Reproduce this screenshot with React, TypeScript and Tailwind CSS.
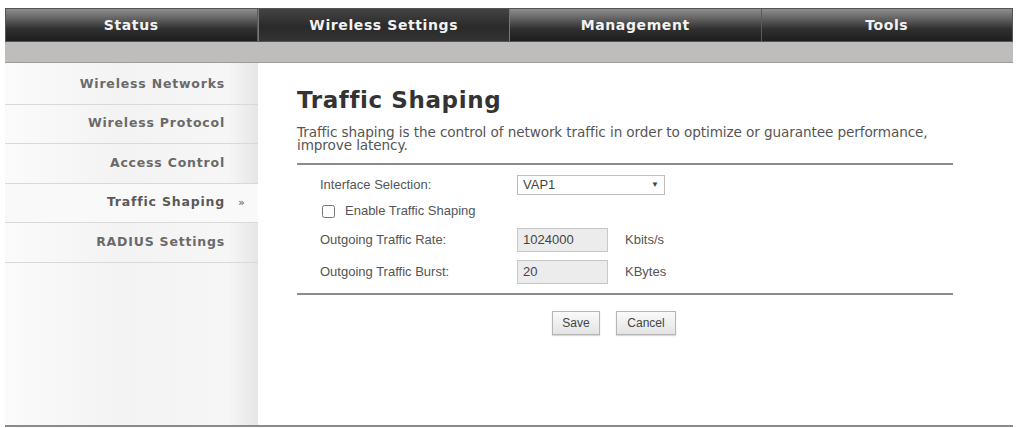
import { useState } from "react";

const tabs = ["Status", "Wireless Settings", "Management", "Tools"];
const side = ["Wireless Networks", "Wireless Protocol", "Access Control", "Traffic Shaping", "RADIUS Settings"];

export default function App() {
  const [enabled, setEnabled] = useState(false);
  const active = "Traffic Shaping";

  return (
    <div className="w-[1018px] h-[428px] bg-white overflow-hidden pt-[8px] pl-[5px] pr-[5px] font-['DejaVu_Sans',sans-serif]">
      {/* top navigation */}
      <div className="flex h-[34px] border border-[#555]">
        {tabs.map((t) => {
          const on = t === "Wireless Settings";
          return (
            <div
              key={t}
              className={
                on
                  ? "flex-1 flex items-center justify-center border-l border-r border-[#777] bg-[linear-gradient(to_bottom,#444,#2a2a2a_55%,#333)] text-[14px] font-bold tracking-[0.6px] text-[#f2f2f2]"
                  : "flex-1 flex items-center justify-center border-r border-[#5a5a5a] last:border-r-0 bg-[linear-gradient(to_bottom,#8e8e8e,#626262_30%,#303030_62%,#1e1e1e)] text-[14px] font-bold tracking-[0.6px] text-[#f2f2f2]"
              }
            >
              {t}
            </div>
          );
        })}
      </div>
      <div className="h-[21px] bg-[#bfbcbc] border-b border-[#9c9a9a]" />

      <div className="flex h-[364px] border-b-2 border-[#8a8a8a]">
        {/* sidebar */}
        <div className="w-[253px] shrink-0 pt-[2px] bg-[linear-gradient(to_right,#fbfbfb,#f3f3f3_45%,#f6f6f6_88%,#e6e6e6)]">
          {side.map((s) => {
            const on = s === active;
            return (
              <div
                key={s}
                className={
                  on
                    ? "flex items-center justify-end h-[39.5px] border-b border-[#d9d9d9] bg-[#f9f9f9] text-[12.5px] font-bold tracking-[0.8px] text-[#595959]"
                    : "flex items-center justify-end h-[39.5px] border-b border-[#d9d9d9] text-[12.5px] font-bold tracking-[0.8px] text-[#6a6a6a]"
                }
              >
                <span>{s}</span>
                <span className="w-[33px] text-center text-[10px] text-[#777] tracking-normal">{on ? "»" : ""}</span>
              </div>
            );
          })}
        </div>

        {/* main */}
        <div className="flex-1 pl-[39px] pt-[23px]">
          <div className="w-[656px]">
            <h1 className="text-[23px] font-bold tracking-[0.6px] text-[#333] leading-[28px]">Traffic Shaping</h1>
            <p className="mt-[12px] text-[13.6px] leading-[13px] tracking-[-0.1px] text-[#555]">
              Traffic shaping is the control of network traffic in order to optimize or guarantee performance, improve latency.
            </p>
            <div className="mt-[11px] h-[2px] bg-[#8c8c8c]" />

            <div className="pl-[23px] pt-[9px] font-['Liberation_Sans',Arial,sans-serif] text-[13px] text-[#555]">
              <div className="flex items-center h-[21px]">
                <span className="w-[197px]">Interface Selection:</span>
                <div className="flex items-center justify-between w-[148px] h-[20px] border border-[#bdbdbd] bg-white px-[5px] text-[#444]">
                  <span>VAP1</span>
                  <span className="text-[8px]">▼</span>
                </div>
              </div>
              <label className="flex items-center h-[22px] mt-[5px] pl-[2px]">
                <input
                  type="checkbox"
                  checked={enabled}
                  onChange={(e) => setEnabled(e.target.checked)}
                  className="w-[13px] h-[13px] mr-[10px] accent-[#999]"
                />
                <span>Enable Traffic Shaping</span>
              </label>
              <div className="flex items-center h-[24px] mt-[6px]">
                <span className="w-[197px]">Outgoing Traffic Rate:</span>
                <div className="w-[91px] h-[24px] flex items-center px-[5px] border border-[#c8c8c8] bg-[#ececec] text-[#444]">1024000</div>
                <span className="ml-[17px]">Kbits/s</span>
              </div>
              <div className="flex items-center h-[24px] mt-[8px]">
                <span className="w-[197px]">Outgoing Traffic Burst:</span>
                <div className="w-[91px] h-[24px] flex items-center px-[5px] border border-[#c8c8c8] bg-[#ececec] text-[#444]">20</div>
                <span className="ml-[17px]">KBytes</span>
              </div>
            </div>

            <div className="mt-[9px] h-[2px] bg-[#8c8c8c]" />

            <div className="flex justify-center gap-[16px] pt-[16px] pr-[22px] font-['Liberation_Sans',Arial,sans-serif] text-[12px] text-[#444]">
              <button className="h-[24px] w-[48px] border border-[#b5b5b5] bg-[linear-gradient(to_bottom,#fafafa,#e4e4e4)] shadow-[0_1px_1px_rgba(0,0,0,0.15)]">Save</button>
              <button className="h-[24px] w-[60px] border border-[#b5b5b5] bg-[linear-gradient(to_bottom,#fafafa,#e4e4e4)] shadow-[0_1px_1px_rgba(0,0,0,0.15)]">Cancel</button>
            </div>
          </div>
        </div>
      </div>
    </div>
  );
}
